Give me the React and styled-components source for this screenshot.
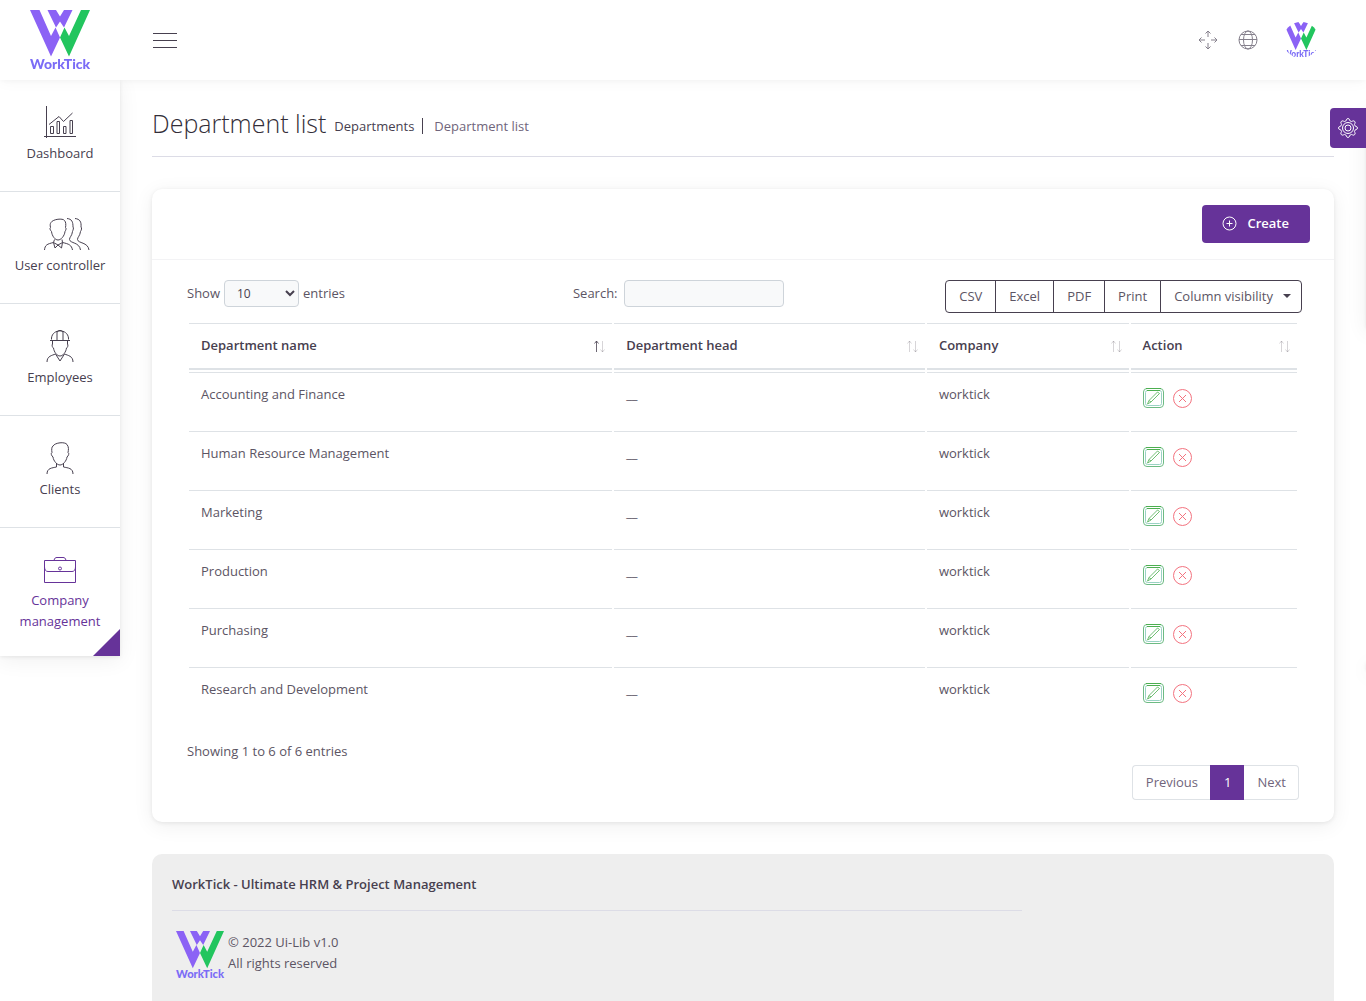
import React from "react";
import styled, { createGlobalStyle, css } from "styled-components";

const ink = "#47404f";
const purple = "#663399";
const line = "#dee2e6";
const shadow = "0 4px 20px 1px rgba(0,0,0,.06), 0 1px 4px rgba(0,0,0,.08)";

const Global = createGlobalStyle`
  *, *::before, *::after { box-sizing: border-box; }
  body { margin: 0; background: #fff; color: ${ink}; }
  body, button, input, select { font-family: "Open Sans", "Noto Sans", sans-serif; font-size: 13px; line-height: 21px; }
`;

const Page = styled.div`
  height: 100vh;
  display: flex;
  flex-direction: column;
  overflow: hidden;
`;
const Header = styled.header`
  position: relative;
  z-index: 3;
  flex: none;
  height: 80px;
  display: flex;
  align-items: center;
  background: #fff;
  box-shadow: 0 1px 15px rgba(0,0,0,.04), 0 1px 6px rgba(0,0,0,.04);
`;
const LogoBox = styled.a`
  width: 120px;
  display: flex;
  justify-content: center;
`;
const IconButton = styled.button`
  display: flex;
  align-items: center;
  justify-content: center;
  width: 40px;
  height: 40px;
  padding: 0;
  border: 0;
  background: none;
  color: ${ink};
`;
const MenuButton = styled(IconButton)`
  margin-left: 25px;
`;
const Tools = styled.div`
  display: flex;
  align-items: center;
  margin-left: auto;
  padding-right: 47px;
  color: #85808c;
`;
const ToolButton = styled(IconButton)`
  color: inherit;
`;
const Avatar = styled.button`
  width: 36px;
  height: 36px;
  margin-left: 15px;
  padding: 0;
  border: 0;
  border-radius: 50%;
  background: none;
  overflow: hidden;
  display: flex;
`;
const Body = styled.div`
  flex: 1;
  min-height: 0;
  display: flex;
  align-items: flex-start;
`;
const Sidebar = styled.nav`
  position: relative;
  z-index: 2;
  flex: none;
  width: 120px;
  background: #fff;
  box-shadow: ${shadow};
`;
const NavItem = styled.a`
  display: flex;
  flex-direction: column;
  align-items: center;
  gap: 5px;
  padding: 26px 10px 25px;
  min-height: 112px;
  position: relative;
  text-align: center;
  text-decoration: none;
  color: ${(p) => (p.$active ? purple : ink)};
  &:not(:last-child) { border-bottom: 1px solid ${line}; }
  ${(p) => p.$active && css`
    padding: 25px 10px 24px;
    &::after {
      content: "";
      position: absolute;
      right: 0;
      bottom: 0;
      border-left: 27px solid transparent;
      border-bottom: 27px solid ${purple};
    }
  `}
`;
const NavIcon = styled.span`
  display: flex;
  width: 32px;
  height: 32px;
  svg { flex: none; }
`;
const Main = styled.main`
  flex: 1;
  min-width: 0;
  padding: 24px 32px 0;
`;
const Breadcrumb = styled.div`
  display: flex;
  align-items: center;
  height: 53px;
  padding-bottom: 14px;
  border-bottom: 1px solid #dcdce6;
  margin-bottom: 32px;
`;
const Title = styled.h1`
  margin: 0;
  font-size: 25px;
  line-height: 36px;
  font-weight: 300;
  color: #332e38;
`;
const Crumbs = styled.ul`
  display: flex;
  align-items: center;
  list-style: none;
  margin: 5px 0 0;
  padding: 0;
`;
const Crumb = styled.li`
  line-height: 16px;
  padding: 0 8px;
  color: #70657b;
  a { color: ${ink}; text-decoration: none; }
  & + & { border-left: 1px solid ${ink}; padding-left: 11px; }
`;
const Card = styled.section`
  border-radius: 10px;
  background: #fff;
  box-shadow: ${shadow};
`;
const CardHeader = styled.div`
  display: flex;
  justify-content: flex-end;
  padding: 16px 24px;
  border-bottom: 1px solid #f3f3f5;
`;
const CreateButton = styled.button`
  display: flex;
  align-items: center;
  gap: 10px;
  height: 38px;
  padding: 0 21px 2px 20px;
  border: 0;
  border-radius: 4px;
  background: ${purple};
  color: #fff;
  font-weight: 600;
`;
const CardBody = styled.div`
  padding: 20px 32px 22px 35px;
`;
const Controls = styled.div`
  display: grid;
  grid-template-columns: 9fr 8fr 9fr;
  align-items: start;
  height: 41px;
`;
const Field = styled.label`
  display: flex;
  align-items: center;
  gap: 4px;
  color: #5c5564;
`;
const fieldBox = css`
  height: 27px;
  border: 1px solid #ced4da;
  border-radius: 4px;
  background: #f8f9fa;
  color: ${ink};
`;
const LengthSelect = styled.select`
  ${fieldBox}
  width: 75px;
  padding: 0 0 0 8px;
  font-size: 12px;
`;
const SearchInput = styled.input`
  ${fieldBox}
  width: 160px;
  margin-left: 2px;
  padding: 0 8px;
`;
const ButtonGroup = styled.div`
  display: flex;
  justify-self: end;
`;
const ExportButton = styled.button`
  display: flex;
  align-items: center;
  gap: 10px;
  height: 33px;
  padding: 0 13px 1px;
  white-space: nowrap;
  border: 1px solid ${ink};
  background: #fff;
  color: #5c5564;
  & + & { margin-left: -1px; }
  &:first-child { border-radius: 4px 0 0 4px; }
  &:last-child { border-radius: 0 4px 4px 0; padding-right: 10px; }
`;
const Caret = styled.span`
  border: 4px solid transparent;
  border-top-color: ${ink};
  border-bottom: 0;
`;
const Table = styled.table`
  width: calc(100% - 3px);
  table-layout: fixed;
  border-collapse: separate;
  border-spacing: 2px;
`;
const Col = styled.col`
  width: ${(p) => p.$w};
`;
const Th = styled.th`
  height: 47px;
  padding: 0 6px 1px 12px;
  text-align: left;
  font-weight: 600;
  border-top: 1px solid ${line};
  border-bottom: 2px solid ${line};
`;
const ThInner = styled.div`
  display: flex;
  align-items: center;
  justify-content: space-between;
`;
const Td = styled.td`
  height: 57px;
  padding: 11px 12px;
  vertical-align: top;
  border-top: 1px solid ${line};
  color: #5c5564;
`;
const Actions = styled.div`
  display: flex;
  gap: 8px;
  padding-top: 4px;
`;
const Action = styled.a`
  display: flex;
  width: 21px;
  height: 21px;
`;
const Info = styled.div`
  margin-top: 15px;
  color: #5c5564;
`;
const Pagination = styled.nav`
  display: flex;
  justify-content: flex-end;
  margin: 3px 3px 0 0;
`;
const PageLink = styled.a`
  height: 35px;
  padding: 6px 12px 6px 13px;
  border: 1px solid ${(p) => (p.$active ? purple : line)};
  background: ${(p) => (p.$active ? purple : "#fff")};
  color: ${(p) => (p.$active ? "#fff" : "#70657b")};
  text-decoration: none;
  &:first-child { border-radius: 4px 0 0 4px; border-right: 0; }
  &:last-child { border-radius: 0 4px 4px 0; border-left: 0; }
`;
const Footer = styled.footer`
  margin-top: 32px;
  height: 240px;
  padding: 20px;
  border-radius: 10px 10px 0 0;
  background: #eee;
`;
const FooterTitle = styled.p`
  margin: 0;
  padding-bottom: 15px;
  width: calc(75% - 7px);
  border-bottom: 1px solid #dcdce6;
  font-weight: 600;
`;
const FooterInfo = styled.div`
  display: flex;
  gap: 4px;
  padding: 20px 0 0 4px;
  p { margin: 1px 0 0; color: #5c5564; }
`;
const Customizer = styled.aside`
  position: fixed;
  z-index: 4;
  top: 108px;
  right: 0;
`;
const Handle = styled.button`
  display: flex;
  align-items: center;
  justify-content: center;
  width: 36px;
  height: 40px;
  padding: 0;
  border: 0;
  border-radius: 4px 0 0 4px;
  background: ${purple};
  color: #fff;
`;
const OffCanvas = styled.div`
  position: fixed;
  z-index: 1;
  left: 100%;
  top: ${(p) => p.$top}px;
  width: 220px;
  height: ${(p) => p.$height}px;
  box-shadow: ${shadow};
`;

const LogoSvg = styled.svg`
  flex: none;
  overflow: visible;
`;

function Logo({ size }) {
  return (
    <LogoSvg width={size} height={size} viewBox="0 0 60 60" role="img" aria-label="WorkTick">
      <path d="M0 0H9.500L21 26L25.500 17.500L30 27.500L21 46.500Z" fill="#8b62f5" />
      <path d="M17.500 0H26L30 6.500L34 0H42.500L34 17.500L30 11.500L26 17.500Z" fill="#8b62f5" />
      <path d="M34.500 17.500L39 26L51 0H60L39 46.500L30 27.500Z" fill="#22c55e" />
      <text x="0" y="59" fontFamily="Lato, sans-serif" fontSize="14" fontWeight="900" fill="#7b6cf6">WorkTick</text>
    </LogoSvg>
  );
}

function Svg({ w = 32, h = 32, children }) {
  return (
    <svg width={w} height={h} viewBox={`0 0 ${w} ${h}`} fill="none" stroke="currentColor" strokeLinejoin="round" aria-hidden="true">
      {children}
    </svg>
  );
}

const icons = {
  chart: (
    <Svg>
      <path d="M2.500 0V32M0 30.500H32M5 18.500L15 10.500L19.500 15.500L28.500 7" />
      <path d="M6.500 20.500h3v7h-3zM13 15.500h2.500v12h-2.500zM19.500 20.500h2.500v7h-2.500zM26 14.500h2.500v13h-2.500z" />
    </Svg>
  ),
  users: (
    <Svg w={46}>
      <path d="M7 4.500C9 1 19 0 20.500 2.500C22 4 22 7 21.500 9.500C22.500 10 22 12 21 13.500C20.500 18 17 22 14 22C11 22 8 18 7.500 13.500C6 12 5.500 10 6.500 9.500C6 7 6 6 7 4.500Z" />
      <path d="M.5 32C1 27 3 26 9.500 24.500L10.500 21.500M18 21.500L18.500 24.500C25 26 27.500 27 28.500 32M9.500 24.500L11 30L14 27L17.500 30L18.500 24.500L14 27Z" />
      <path d="M23 .5C28 1 29 4 29 9C30 10 29 12 28.500 13.500C28 18 25.500 19 25.500 21.500C26 25.500 35.500 24 36.500 32M31 .5C36 1 37.500 4 37 9C38 10 37.500 12 36.500 13.500C36 18 33.500 19 33.500 21.500C34 25.500 44 24 45 32" />
    </Svg>
  ),
  worker: (
    <Svg>
      <path d="M7.500 9.500V8C8.500-1.500 23.500-1.500 24.500 8V9.500M6 10.500H26M13 10V2L15 .5H17L19 2V10M8.500 11V14C7.500 15 8.500 18 9.500 18C10 22 13 26 16 26C19 26 22 22 22.500 18C23.500 18 24.500 15 23.500 14V11" />
      <path d="M3 32C3 26 8 25.500 11.500 24L16 31L20.500 24C24 25.500 29 26 29 32" />
    </Svg>
  ),
  person: (
    <Svg>
      <path d="M9 4C11 .5 21-.5 23 2.500C25 5 24.500 8 24 10.500C25.500 11 24.500 14 23 15C22.500 19 19 23 16 23C13 23 9.500 19 9 15C7.500 14 6.500 11 8 10.500C7.500 8 7.500 5 9 4Z" />
      <path d="M3 32C3 26 8 26 12.500 25V21M19.500 21V25C24 26 29 26 29 32" />
    </Svg>
  ),
  briefcase: (
    <Svg>
      <path d="M.5 7.500H31.500V29.500H.5ZM.5 14C.5 17 2 18.500 4 18.500H28C30 18.500 31.500 17 31.500 14M10 7.500C10.500 5 11.500 4.500 13 4.500H19C20.500 4.500 21.500 5 22 7.500" />
      <circle cx="16" cy="15.500" r="1.500" />
    </Svg>
  ),
};

function gearPath() {
  let d = "";
  for (let i = 0; i <= 64; i++) {
    const a = (i / 64) * Math.PI * 2;
    const r = 8.3 + 1.1 * Math.tanh(2 * Math.cos(8 * a));
    d += `${i ? "L" : "M"}${(10 + r * Math.sin(a)).toFixed(2)} ${(10 - r * Math.cos(a)).toFixed(2)}`;
  }
  return d + "Z";
}

const nav = [
  { label: "Dashboard", icon: "chart" },
  { label: "User controller", icon: "users" },
  { label: "Employees", icon: "worker" },
  { label: "Clients", icon: "person" },
  { label: "Company management", icon: "briefcase", active: true },
];
const columns = ["Department name", "Department head", "Company", "Action"];
const departments = ["Accounting and Finance", "Human Resource Management", "Marketing", "Production", "Purchasing", "Research and Development"];

function SortIcon({ sorted }) {
  return (
    <svg width="13" height="14" viewBox="0 0 13 14" fill="none" stroke={ink} aria-hidden="true">
      <path d="M3.500 13V2M1.500 4.500L3.500 2L5.500 4.500" opacity={sorted ? 0.8 : 0.22} />
      <path d="M9.500 2V13M7.500 10.500L9.500 13L11.500 10.500" opacity="0.22" />
    </svg>
  );
}

export default function App() {
  return (
    <Page>
      <Global />
      <Header>
        <LogoBox href="#" aria-label="WorkTick"><Logo size={60} /></LogoBox>
        <MenuButton aria-label="Toggle menu">
          <Svg w={24} h={16}><path d="M0 1.500H24M0 8.500H24M0 15.500H24" /></Svg>
        </MenuButton>
        <Tools>
          <ToolButton aria-label="Full screen">
            <Svg w={20} h={20}>
              <path d="M10 7V1M7.500 3.500L10 1L12.500 3.500M10 13V19M7.500 16.500L10 19L12.500 16.500M7 10H1M3.500 7.500L1 10L3.500 12.500M13 10H19M16.500 7.500L19 10L16.500 12.500" />
            </Svg>
          </ToolButton>
          <ToolButton aria-label="Language">
            <Svg w={20} h={20}>
              <circle cx="10" cy="10" r="9" />
              <ellipse cx="10" cy="10" rx="4.500" ry="9" />
              <path d="M1 9.500H19M3 4.500H17M3 15.500H17" />
            </Svg>
          </ToolButton>
          <Avatar aria-label="Account"><Logo size={36} /></Avatar>
        </Tools>
      </Header>
      <Body>
        <Sidebar>
          {nav.map((n) => (
            <NavItem key={n.label} href="#" $active={n.active}>
              <NavIcon>{icons[n.icon]}</NavIcon>
              <span>{n.label}</span>
            </NavItem>
          ))}
        </Sidebar>
        <Main>
          <Breadcrumb>
            <Title>Department list</Title>
            <Crumbs>
              <Crumb><a href="#">Departments</a></Crumb>
              <Crumb>Department list</Crumb>
            </Crumbs>
          </Breadcrumb>
          <Card>
            <CardHeader>
              <CreateButton>
                <Svg w={15} h={15}><circle cx="7.500" cy="7.500" r="6.500" /><path d="M7.500 4.500V10.500M4.500 7.500H10.500" /></Svg>
                Create
              </CreateButton>
            </CardHeader>
            <CardBody>
              <Controls>
                <Field>
                  Show
                  <LengthSelect defaultValue="10"><option>10</option><option>25</option><option>50</option></LengthSelect>
                  entries
                </Field>
                <Field>Search:<SearchInput type="search" /></Field>
                <ButtonGroup>
                  {["CSV", "Excel", "PDF", "Print"].map((b) => <ExportButton key={b}>{b}</ExportButton>)}
                  <ExportButton>Column visibility<Caret /></ExportButton>
                </ButtonGroup>
              </Controls>
              <Table>
                <colgroup><Col $w="38.400%" /><Col $w="28.200%" /><Col $w="18.300%" /><Col /></colgroup>
                <thead>
                  <tr>
                    {columns.map((c, i) => (
                      <Th key={c}><ThInner>{c}<SortIcon sorted={i === 0} /></ThInner></Th>
                    ))}
                  </tr>
                </thead>
                <tbody>
                  {departments.map((d) => (
                    <tr key={d}>
                      <Td>{d}</Td>
                      <Td>__</Td>
                      <Td>worktick</Td>
                      <Td>
                        <Actions>
                          <Action href="#" aria-label={`Edit ${d}`}>
                            <svg width="21" height="21" viewBox="0 0 21 21" fill="none" stroke="#6dbb83" aria-hidden="true">
                              <rect x=".5" y=".5" width="20" height="19" rx="3.500" />
                              <rect x="2.500" y="2.500" width="16" height="15" rx="2" stroke="#9ad2c4" />
                              <path d="M3 .5H18M4 2.500H17" stroke="#4caf50" />
                              <path d="M4.500 16L6 12.500L14.500 4L16.500 5.500L8 14ZM6 12.500L8 14" strokeWidth=".8" stroke="#4caf50" />
                            </svg>
                          </Action>
                          <Action href="#" aria-label={`Delete ${d}`}>
                            <svg width="21" height="21" viewBox="0 0 21 21" fill="none" stroke="#f3737f" aria-hidden="true">
                              <circle cx="10.500" cy="10.500" r="9" />
                              <path d="M7 7L14 14M14 7L7 14" />
                            </svg>
                          </Action>
                        </Actions>
                      </Td>
                    </tr>
                  ))}
                </tbody>
              </Table>
              <Info>Showing 1 to 6 of 6 entries</Info>
              <Pagination aria-label="Table pages">
                <PageLink href="#">Previous</PageLink>
                <PageLink href="#" $active>1</PageLink>
                <PageLink href="#">Next</PageLink>
              </Pagination>
            </CardBody>
          </Card>
          <Footer>
            <FooterTitle>WorkTick - Ultimate HRM &amp; Project Management</FooterTitle>
            <FooterInfo>
              <Logo size={48} />
              <p>© 2022 Ui-Lib v1.0<br />All rights reserved</p>
            </FooterInfo>
          </Footer>
        </Main>
      </Body>
      <OffCanvas $top={108} $height={220} />
      <OffCanvas $top={662} $height={8} />
      <Customizer>
        <Handle aria-label="Settings">
          <Svg w={20} h={20}><path d={gearPath()} /><circle cx="10" cy="10" r="5.500" /><circle cx="10" cy="10" r="3" /></Svg>
        </Handle>
      </Customizer>
    </Page>
  );
}
